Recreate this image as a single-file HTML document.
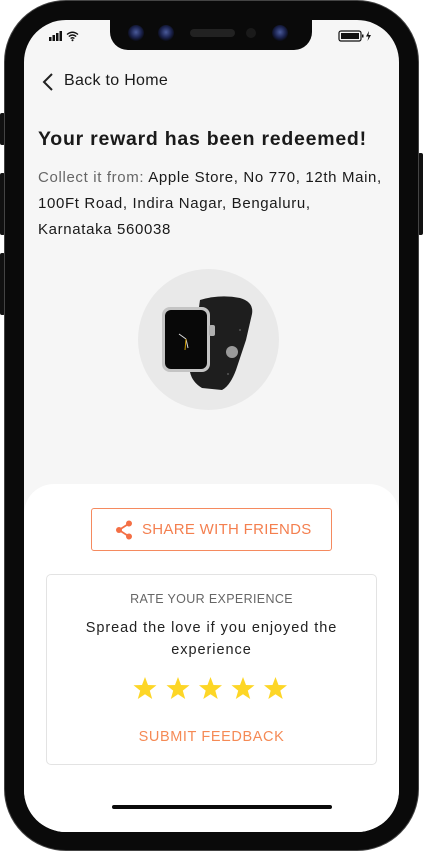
<!DOCTYPE html>
<html><head><meta charset="utf-8">
<style>
*{margin:0;padding:0;box-sizing:border-box}
html,body{width:423px;height:852px;overflow:hidden;background:#fff;font-family:"Liberation Sans",sans-serif}
.phone{position:absolute;left:4px;top:0;width:415px;height:851px;background:#0a0a0a;border-radius:62px;border:1px solid #444}
.btn{position:absolute;background:#111;border-radius:2px}
.screen{position:absolute;left:24px;top:20px;width:375px;height:812px;background:#f6f6f6;border-radius:42px;overflow:hidden}
.notch{position:absolute;left:86px;top:0;width:202px;height:30px;background:#0a0a0a;border-radius:0 0 18px 18px}
.cam{position:absolute;top:5px;width:16px;height:16px;border-radius:50%;background:radial-gradient(circle at 50% 45%,#4a5a9a 0,#1c2450 45%,#0b0d1a 70%)}
.sheet{position:absolute;left:0;top:464px;width:375px;height:360px;background:#fff;border-radius:30px 30px 0 0}
.t{position:absolute;color:#1a1a1a}
</style></head><body>
<div class="btn" style="left:0;top:113px;width:5px;height:32px"></div>
<div class="btn" style="left:0;top:173px;width:5px;height:62px"></div>
<div class="btn" style="left:0;top:253px;width:5px;height:62px"></div>
<div class="btn" style="left:418px;top:153px;width:5px;height:82px"></div>
<div class="phone"></div>
<div class="screen">
  <div class="notch">
    <div class="cam" style="left:18px"></div>
    <div class="cam" style="left:48px"></div>
    <div style="position:absolute;left:80px;top:9px;width:45px;height:8px;border-radius:4px;background:#222"></div>
    <div style="position:absolute;left:136px;top:8px;width:10px;height:10px;border-radius:50%;background:#1a1a1a"></div>
    <div class="cam" style="left:162px"></div>
  </div>
  <svg style="position:absolute;left:24px;top:10px" width="36" height="12" viewBox="0 0 36 12">
    <rect x="1" y="7" width="2.5" height="4" fill="#111"/><rect x="4.5" y="5" width="2.5" height="6" fill="#111"/><rect x="8" y="3" width="2.5" height="8" fill="#111"/><rect x="11.5" y="1" width="2.5" height="10" fill="#111"/>
    <path d="M19 4.5 Q24.5 0 30 4.5 M20.8 6.5 Q24.5 3.5 28.2 6.5 M22.6 8.5 Q24.5 7 26.4 8.5" stroke="#111" stroke-width="1.4" fill="none"/><circle cx="24.5" cy="10.3" r="1" fill="#111"/>
  </svg>
  <svg style="position:absolute;left:314px;top:9px" width="36" height="14" viewBox="0 0 36 14">
    <rect x="1" y="2" width="22" height="10" rx="2" fill="none" stroke="#111" stroke-width="1.2"/><rect x="3" y="4" width="18" height="6" fill="#111"/><rect x="24" y="5.5" width="1.5" height="3" fill="#111"/>
    <path d="M31 2 L28 7.5 H30.5 L29.5 12 L33 6 H30.5 Z" fill="#111"/>
  </svg>
  <svg style="position:absolute;left:18px;top:52px" width="12" height="20" viewBox="0 0 12 20"><path d="M10 2 L2 10 L10 18" stroke="#222" stroke-width="2" fill="none"/></svg>
  <div class="t" style="left:40px;top:52px;font-size:16px;letter-spacing:0.3px">Back to Home</div>
  <div class="t" style="left:14px;top:108px;font-size:19.5px;font-weight:bold;letter-spacing:0.75px">Your reward has been redeemed!</div>
  <div class="t" style="left:14px;top:145px;white-space:nowrap;font-size:15px;line-height:26px;letter-spacing:0.65px"><span style="color:#666">Collect it from:</span> Apple Store, No 770, 12th Main,<br>100Ft Road, Indira Nagar, Bengaluru,<br>Karnataka 560038</div>
  <div style="position:absolute;left:114px;top:249px;width:141px;height:141px;border-radius:50%;background:#e9e9e9"></div>
  <svg style="position:absolute;left:134px;top:270px" width="110" height="110" viewBox="0 0 110 110">
    <path d="M42 10 Q62 4 82 8 Q96 12 94 24 L88 50 L78 80 Q72 96 64 100 L44 98 Q34 92 32 82 Z" fill="#1e1e1e"/>
    <rect x="4" y="17" width="48" height="65" rx="8" fill="#c4c4c4"/>
    <rect x="7" y="20" width="42" height="59" rx="6" fill="#080808"/>
    <rect x="51" y="35" width="6" height="11" rx="2" fill="#b0b0b0"/>
    <circle cx="74" cy="62" r="6" fill="#9a9a9a"/>
    <circle cx="82" cy="40" r="1" fill="#555"/><circle cx="70" cy="84" r="1" fill="#555"/>
    <path d="M28 49 L21 44 M28 49 L30 58" stroke="#ddd" stroke-width="1"/>
    <path d="M28 49 L27 60" stroke="#c90" stroke-width="1"/>
  </svg>
  <div class="sheet"></div>
  <div style="position:absolute;left:67px;top:488px;width:241px;height:43px;border:1.3px solid #f58a5f;border-radius:3px"></div>
  <svg style="position:absolute;left:91px;top:500px" width="18" height="20" viewBox="0 0 18 20">
    <path d="M14 3.5 L4 10 L14 16.5" stroke="#f46f45" stroke-width="1.8" fill="none"/>
    <circle cx="14" cy="3.5" r="3" fill="#f46f45"/><circle cx="4" cy="10" r="3" fill="#f46f45"/><circle cx="14" cy="16.5" r="3" fill="#f46f45"/>
  </svg>
  <div class="t" style="left:118px;top:501px;font-size:15px;letter-spacing:0.3px;color:#f47f4f">SHARE WITH FRIENDS</div>
  <div style="position:absolute;left:22px;top:554px;width:331px;height:191px;border:1px solid #e3e3e3;border-radius:5px"></div>
  <div class="t" style="left:22px;width:331px;text-align:center;top:572px;font-size:12.5px;letter-spacing:0.35px;color:#666">RATE YOUR EXPERIENCE</div>
  <div class="t" style="left:30px;width:315px;text-align:center;top:597px;font-size:14.5px;line-height:22px;letter-spacing:0.95px;color:#222">Spread the love if you enjoyed the experience</div>
  <svg style="position:absolute;left:109px;top:656px" width="157" height="26" viewBox="0 0 157 26">
    <defs><path id="s" d="M12 1 L15 9 L23.5 9.3 L16.8 14.6 L19.2 23 L12 18.2 L4.8 23 L7.2 14.6 L0.5 9.3 L9 9 Z" fill="#fdd626"/></defs>
    <use href="#s" x="0"/><use href="#s" x="33"/><use href="#s" x="65.5"/><use href="#s" x="98"/><use href="#s" x="130.5"/>
  </svg>
  <div class="t" style="left:22px;width:331px;text-align:center;top:709px;font-size:14.5px;letter-spacing:0.6px;color:#f58a55">SUBMIT FEEDBACK</div>
  <div style="position:absolute;left:88px;top:785px;width:220px;height:4px;border-radius:2px;background:#0a0a0a"></div>
</div>
</body></html>
